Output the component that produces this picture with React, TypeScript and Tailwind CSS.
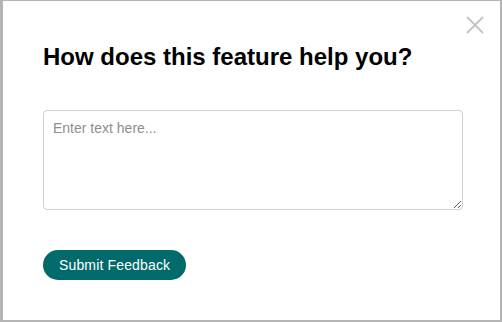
import { X } from 'lucide-react'

export default function App() {
  return (
    <div className="w-[502px] h-[322px] bg-[#b4b4b4] pt-[1px] pl-[3px] pr-[2px] pb-[2px] font-['Liberation_Sans',Arial,sans-serif]">
      <div className="relative h-full w-full bg-white pl-[40px] pr-[35px]">
        <button className="absolute right-[10px] top-[9px] text-[#c4c4c4]">
          <X className="h-[30px] w-[30px]" strokeWidth={1.5} />
        </button>
        <h2 className="pt-[42px] text-[24px] leading-[28px] font-bold text-black">How does this feature help you?</h2>
        <textarea
          placeholder="Enter text here..."
          className="mt-[39px] block h-[100px] w-[420px] rounded-[4px] border border-[#d0d0d0] px-[9px] py-[8px] text-[14px] leading-[18px] text-black placeholder:text-[#8e8e8e] outline-none"
        />
        <button className="mt-[40px] h-[30px] rounded-full bg-[#016a6a] px-[16px] text-[14px] tracking-[0.15px] text-white">
          Submit Feedback
        </button>
      </div>
    </div>
  )
}
